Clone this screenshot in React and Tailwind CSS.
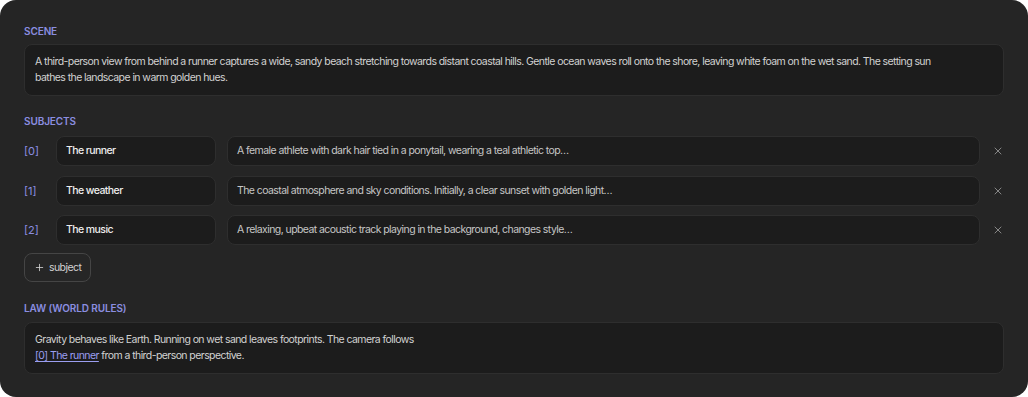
import { X, Plus } from "lucide-react";

// Sujeitos exibidos na lista
const subjects = [
  { name: "The runner", desc: "A female athlete with dark hair tied in a ponytail, wearing a teal athletic top…" },
  { name: "The weather", desc: "The coastal atmosphere and sky conditions. Initially, a clear sunset with golden light…" },
  { name: "The music", desc: "A relaxing, upbeat acoustic track playing in the background, changes style…" },
];

const Label = ({ children }) => (
  <h3 className="text-[10px] leading-[14px] font-semibold uppercase tracking-[-0.01em] text-[#8b8ee0]">
    {children}
  </h3>
);

const Box = ({ children, className = "" }) => (
  <div className={`rounded-lg border border-[#2e2e2e] bg-[#1c1c1c] ${className}`}>{children}</div>
);

export default function App() {
  return (
    <div className="bg-white min-h-screen" style={{ fontFamily: "Inter, 'Noto Sans', sans-serif" }}>
      <div className="w-[1028px] h-[397px] rounded-2xl bg-[#252525] px-6 pt-6 flex flex-col text-[10.5px] leading-4 tracking-[-0.055em] text-[#d2d2d2]">
        {/* Cena */}
        <Label>Scene</Label>
        <Box className="mt-1.5 px-[10px] py-[9px]">
          <p className="max-w-[910px]">
            A third-person view from behind a runner captures a wide, sandy beach stretching towards distant coastal hills.
            Gentle ocean waves roll onto the shore, leaving white foam on the wet sand. The setting sun bathes the landscape
            in warm golden hues.
          </p>
        </Box>

        {/* Sujeitos */}
        <div className="mt-[18px]">
          <Label>Subjects</Label>
        </div>
        <div className="mt-2 flex flex-col gap-[9.5px]">
          {subjects.map((s, i) => (
            <div key={i} className="flex items-center h-[30px]">
              <span className="w-8 text-[11px] text-[#8b8ee0] tracking-normal">[{i}]</span>
              <Box className="w-[160px] h-full flex items-center px-[9px] font-medium text-[#ededed]">{s.name}</Box>
              <Box className="ml-[11px] flex-1 h-full flex items-center px-[9px] text-[#c6c6c6]">{s.desc}</Box>
              <div className="w-6 flex justify-end">
                <X size={12} strokeWidth={1.7} className="text-[#9a9a9a]" />
              </div>
            </div>
          ))}
        </div>
        <div className="mt-2">
          <button className="h-[29px] flex items-center gap-1 rounded-lg border border-[#454545] bg-[#262626] px-[9px] text-[#d2d2d2]">
            <Plus size={11} strokeWidth={1.8} />
            <span>subject</span>
          </button>
        </div>

        {/* Lei / regras do mundo */}
        <div className="mt-[19px]">
          <Label>Law (World Rules)</Label>
        </div>
        <Box className="mt-[7px] px-[10px] py-[9px]">
          <p>
            Gravity behaves like Earth. Running on wet sand leaves footprints. The camera follows
            <br />
            <span className="text-[#9b9ef0] underline underline-offset-2">[0] The runner</span> from a third-person perspective.
          </p>
        </Box>
      </div>
    </div>
  );
}
